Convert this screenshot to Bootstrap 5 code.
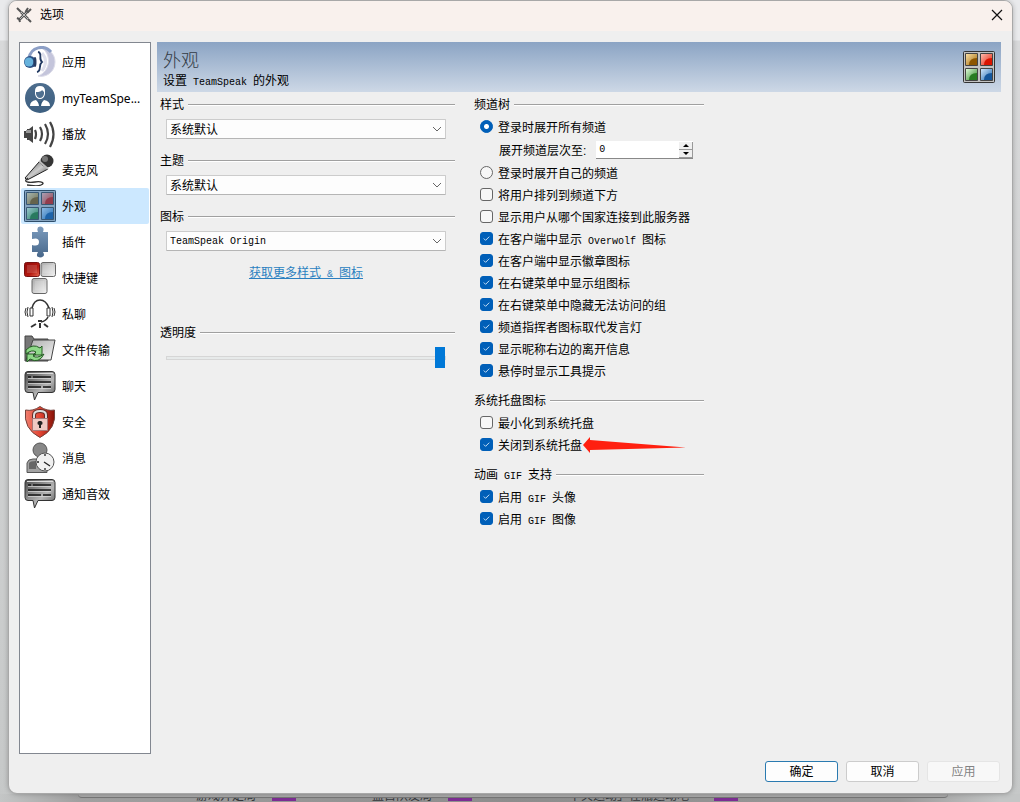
<!DOCTYPE html>
<html lang="zh-CN">
<head>
<meta charset="utf-8">
<meta name="viewport" content="width=device-width, initial-scale=1">
<title>选项</title>
<link href="https://cdn.jsdelivr.net/npm/bootstrap@5.3.0/dist/css/bootstrap.min.css" rel="stylesheet">
<style>
  body { font: 12px/16px "Liberation Sans", "Noto Sans CJK SC", sans-serif; color: #000; background: linear-gradient(#e9eaec 0, #e9eaec 40px, #d8d9da 41px, #c6c8c8 100%); }
  .dialog { margin: 0 7px 0 8px; background: #efefef; border: 1px solid #a8a8a8; border-radius: 9px; box-shadow: 0 0 5px #00000040; position: relative; overflow: hidden; }
  .titlebar { height: 30px; background: #f9f1ed; padding: 0 7px 3px; }
  .titlebar button { width: 14px; height: 14px; }
  .workspace { padding: 11px 11px 0 10px; gap: 6px; }
  .sections { width: 132px; background: #fff; border: 1px solid #828790; padding: 1px; }
  .sections a { height: 36px; padding-left: 3px; gap: 6px; color: #000; font-family: "Noto Sans", "Noto Sans CJK SC", sans-serif; text-decoration: none; border-radius: 2px; white-space: nowrap; }
  .sections a.active { background: #cce8ff; }
  .sections span { padding-top: 2px; }
  .sections svg { width: 32px; height: 32px; flex: none; }
  .banner { height: 50px; padding: 0 6px; background: linear-gradient(#8ba4c4, #cdd8e6); }
  .banner h1 { font: 300 18px/20px "Noto Sans CJK SC", sans-serif; color: #333b45; margin: 0 0 4px; padding-top: 4px; }
  .lat { font-family: "Liberation Mono", monospace; font-size: 10px; line-height: 10px; white-space: pre; }
  .settings { display: grid; grid-template-columns: minmax(0, 295px) minmax(0, 230px); gap: 19px; padding-left: 3px; }
  .heading { display: flex; align-items: center; gap: 4px; height: 24px; margin: 0; padding-top: 2px; font-size: 12px; line-height: 16px; font-weight: 400; white-space: nowrap; }
  .heading::after { content: ""; flex: 1; height: 2px; background: #a0a0a0; border-bottom: 1px solid #fff; }
  .group-gap { margin-top: 6px; }
  .field { margin: 3px 9px 9px 6px; }
  .field .form-select { height: 20px; padding: 1px 20px 0 3px; font-size: 12px; line-height: 16px; color: #000; border: 1px solid #ccc; border-bottom-color: #b5b5b5; border-radius: 1px; background-color: #fdfdfd; background-position: right 3px center; background-size: 10px 10px; background-image: url("data:image/svg+xml,%3csvg xmlns='http://www.w3.org/2000/svg' viewBox='0 0 10 10'%3e%3cpath fill='none' stroke='%23666' d='M1 3l4 4 4-4'/%3e%3c/svg%3e"); }
  .field .form-select.lat { font-size: 10px; }
  .more { height: 24px; margin-right: 3px; padding-top: 2px; }
  .more a { color: #2a7fc0; }
  .opacity-group { margin-top: 36px; }
  .slider { height: 26px; margin: 0 9px 0 6px; padding-top: 2px; }
  .slider input { appearance: none; width: 100%; height: 22px; margin: 0; background: none; display: block; }
  .slider input::-webkit-slider-runnable-track { height: 4px; background: #e7eaea; border: 1px solid #d6d6d6; }
  .slider input::-webkit-slider-thumb { appearance: none; width: 10px; height: 21px; margin-top: -10px; background: #0078d7; border: 0; border-radius: 0; }
  .option { display: flex; align-items: center; gap: 5px; height: 22px; margin: 0; padding-left: 6px; white-space: nowrap; }
  .option label, .level label { padding-top: 2px; }
  .option .form-check-input { width: 13px; height: 13px; float: none; margin: 0 0 1px; border-color: #666; background-color: #f7f7f7; flex: none; }
  .option .form-check-input[type=checkbox] { border-radius: 3px; }
  .option .form-check-input:checked { background-color: #005fb8; border-color: #005fb8; }
  .option .form-check-input[type=radio]:checked { background-image: radial-gradient(circle, #fff 2px, transparent 3px); }
  .option .form-check-input[type=checkbox]:checked { background-image: url("data:image/svg+xml,%3csvg xmlns='http://www.w3.org/2000/svg' viewBox='0 0 12 12'%3e%3cpath fill='none' stroke='%23d5e8fa' d='M3 6l2 2 4-4'/%3e%3c/svg%3e"); }
  .level { height: 24px; padding-left: 25px; gap: 10px; white-space: nowrap; }
  .spin { width: 97px; height: 18px; background: #fff; border-bottom: 1px solid #888; }
  .spin input { width: 100%; min-width: 0; border: 0; padding: 0 3px; background: none; font: 10px/16px "Liberation Mono", monospace; appearance: textfield; }
  .spin input::-webkit-inner-spin-button { display: none; }
  .spin button { width: 14px; height: 8px; padding: 0; border: 0; border-right: 1px solid #999; border-bottom: 1px solid #999; background: #f0f0f0; display: flex; align-items: center; justify-content: center; }
  .pointer { left: 100%; top: 0; width: 104px; height: 18px; }
  .actions { gap: 8px; padding: 7px 12px 11px; }
  .actions .btn { width: 73px; height: 21px; padding: 1px 0 0; font-size: 12px; line-height: 16px; color: #000; background: #fdfdfd; border: 1px solid #ccc; border-radius: 3px; }
  .actions .btn.confirm { border-color: #2a7ab0; }
  .actions .btn:disabled { color: #838383; background: #f8f8f8; border-color: #e5e5e5; opacity: 1; }
  .behind { height: 8px; overflow: hidden; background: linear-gradient(90deg, #c4c6c6 0, #a0a0a0 78px, #8d8d8d 50%, #999 900px, #c4c6c6 1000px); }
  .behind-edge { height: 4px; margin: 0 72px 0 78px; background: #a9a9a9; border-bottom: 1px solid #777; border-radius: 0 0 6px 6px; }
  .behind-rows { height: 3px; padding-left: 196px; overflow: hidden; color: #35383c; align-items: flex-end; white-space: nowrap; }
  .behind-rows span { line-height: 10px; flex: none; }
  .behind-rows .w-a { width: 61px; }
  .behind-rows .w-b { width: 142px; }
  .tag { width: 24px; height: 3px; background: #7c2d92; margin-left: 15px; margin-right: 76px; flex: none; }
  .tag.wide { margin-right: 85px; }
</style>
</head>
<body class="d-flex flex-column min-vh-100">
<svg class="position-absolute" width="0" height="0" aria-hidden="true">
  <defs>
    <linearGradient id="dark" x1="0" y1="0" x2="1" y2="1"><stop offset="0" stop-color="#555"/><stop offset=".5" stop-color="#ccc"/><stop offset="1" stop-color="#333"/></linearGradient>
    <linearGradient id="bubbleFill" x1="0" y1="0" x2="1" y2="1"><stop offset="0" stop-color="#4a4a4a"/><stop offset=".6" stop-color="#b5b5b5"/><stop offset="1" stop-color="#555"/></linearGradient>
    <linearGradient id="blue" x1="0" y1="0" x2="0" y2="1"><stop offset="0" stop-color="#4d6d8d"/><stop offset="1" stop-color="#3d5f80"/></linearGradient>
    <linearGradient id="steel" x1="0" y1="0" x2="0" y2="1"><stop offset="0" stop-color="#7b9bbd"/><stop offset="1" stop-color="#47678a"/></linearGradient>
    <linearGradient id="key" x1="0" y1="0" x2="1" y2="1"><stop offset="0" stop-color="#aaa"/><stop offset="1" stop-color="#f4f4f4"/></linearGradient>
    <linearGradient id="redKey" x1="0" y1="0" x2="1" y2="1"><stop offset="0" stop-color="#930a0a"/><stop offset=".6" stop-color="#b51a10"/><stop offset="1" stop-color="#e56a55"/></linearGradient>
    <linearGradient id="shield" x1="0" y1="0" x2="1" y2="0"><stop offset="0" stop-color="#f08070"/><stop offset=".5" stop-color="#e24432"/><stop offset="1" stop-color="#831006"/></linearGradient>
    <linearGradient id="ta" x1="0" y1="0" x2="1" y2="1"><stop offset="0" stop-color="#ffe5ac"/><stop offset="1" stop-color="#9a6200"/></linearGradient>
    <linearGradient id="tb" x1="0" y1="0" x2="1" y2="1"><stop offset="0" stop-color="#ffc2b5"/><stop offset="1" stop-color="#e21800"/></linearGradient>
    <linearGradient id="tc" x1="0" y1="0" x2="1" y2="1"><stop offset="0" stop-color="#e5ffe0"/><stop offset="1" stop-color="#28831f"/></linearGradient>
    <linearGradient id="td" x1="0" y1="0" x2="1" y2="1"><stop offset="0" stop-color="#d8ecff"/><stop offset="1" stop-color="#1762ad"/></linearGradient>
    <symbol id="bubble" viewBox="0 0 32 32">
      <path d="M4 1.500h24q3 0 3 3v15q0 3-3 3H14L10.500 30 9 22.500H4q-3 0-3-3v-15q0-3 3-3z" fill="url(#bubbleFill)" stroke="#333"/>
      <path d="M3 3.500h26" stroke="#ddd"/>
      <path d="M4 7h3m2 0h18M4 12h23M4 17h13m2 0h8" stroke="#151515" stroke-width="1.600"/>
      <path d="M4 8.500h23M4 13.500h23M4 18.500h23" stroke="#ddd" stroke-width=".7"/>
    </symbol>
    <symbol id="tiles" viewBox="0 0 32 32">
      <rect x=".5" y=".5" width="31" height="31" rx="1" fill="#c2c2c2" stroke="#333"/>
      <g stroke="#444"><path fill="url(#ta)" d="M2.500 2.500h12v12h-12z"/><path fill="url(#tb)" d="M17.500 2.500h12v12h-12z"/><path fill="url(#tc)" d="M2.500 17.500h12v12h-12z"/><path fill="url(#td)" d="M17.500 17.500h12v12h-12z"/></g>
      <path d="M6 14q0-7 8-7v7z" fill="#8c5500"/><path d="M21 14q0-7 8-7v7z" fill="#d91400"/><path d="M6 29q0-7 8-7v7z" fill="#287c20"/><path d="M21 29q0-7 8-7v7z" fill="#15569b"/>
    </symbol>
  </defs>
</svg>

<main class="dialog d-flex flex-column flex-grow-1">
  <header class="titlebar d-flex align-items-center">
    <svg width="16" height="16" viewBox="0 0 16 16" aria-hidden="true"><path d="M3.500 12.500 12 4M12 12 5 5" stroke="#555" stroke-width="2.600"/><path d="M3.500 12.500 12 4M12 12 5 5" stroke="#bbb"/><path d="m1 1 4 4M15 2l-3 3-2-1 2-3M1 11l2 1 1 3M12 12l3 3" fill="none" stroke="#555" stroke-width="2"/></svg>
    <span class="flex-grow-1 ps-1 ms-1">选项</span>
    <button type="button" class="border-0 p-0 bg-transparent d-flex align-items-center" aria-label="关闭"><svg width="12" height="12" viewBox="0 0 12 12"><path d="m1 1 10 10M11 1 1 11" stroke="#111" stroke-width="1.200"/></svg></button>
  </header>

  <div class="workspace d-flex flex-grow-1">
    <nav class="sections flex-shrink-0">
      <a href="#" class="d-flex align-items-center"><svg viewBox="0 0 32 32"><path d="M19 3C28 4 31 10 31 16 31 26 22 32 14 30 27 25 27 9 19 3z" fill="#c4c5db" stroke="#dcdce8"/><path d="M18 7q7 8 0 18" fill="none" stroke="#dfe0ec" stroke-width="3"/><path d="M5 12C7 1 20-2 27 6" fill="none" stroke="#8c9fc6" stroke-width="3"/><path d="M14 6c5 1 0 7 4 10-4 3 0 9-5 10" fill="none" stroke="#213961" stroke-width="1.800"/><circle cx="6" cy="16" r="6" fill="#294f83"/><circle cx="5" cy="16" r="4.500" fill="#66b2dc"/><ellipse cx="11" cy="16" rx="1.500" ry="5" fill="#273d62"/></svg><span>应用</span></a>
      <a href="#" class="d-flex align-items-center"><svg viewBox="0 0 32 32"><circle cx="16" cy="16" r="15" fill="url(#blue)"/><path d="M11 9q0-5 5-5t5 5v3q-1 5-5 5t-5-5z" fill="#fff"/><path d="M12 10q5 0 6-2l2 2v2q-1 4-4 4t-4-4z" fill="#507090"/><path d="M6 24q0-5 6-6l4 5 4-5q6 1 6 6z" fill="#fff"/><path d="m14 19 2 1 2-1-1 5h-2z" fill="#31577a"/></svg><span>myTeamSpe...</span></a>
      <a href="#" class="d-flex align-items-center"><svg viewBox="0 0 32 32"><path d="M0 13h3v7H0zM3 11h2l4-3v17l-4-3H3z" fill="#444"/><path d="M2 12h5v3H2z" fill="#999"/><g fill="none" stroke="#444" stroke-width="2.200"><path d="M11 12q2 4 0 9M16 9q4 7 0 14M21 6q6 10 0 20M26 4q7 12 0 25"/></g></svg><span>播放</span></a>
      <a href="#" class="d-flex align-items-center"><svg viewBox="0 0 32 32"><path d="m15 8 9 7L7 24l-4 2-2-2z" fill="url(#dark)" stroke="#222"/><circle cx="23" cy="7" r="6.500" fill="#353535"/><circle cx="21" cy="5" r="3" fill="#777"/><path d="m15 7 9 8" stroke="#bbb" stroke-width="2"/><path d="M4 24c-6 4 1 5 7 4s11 1 6 3-10 0-14 0" fill="none" stroke="#333" stroke-width="1.300"/></svg><span>麦克风</span></a>
      <a href="#" class="active d-flex align-items-center" aria-current="page"><svg viewBox="0 0 32 32"><use href="#tiles"/><path fill="#2a78bf" fill-opacity=".4" d="M0 0h32v32H0z"/></svg><span>外观</span></a>
      <a href="#" class="d-flex align-items-center"><svg viewBox="0 0 32 32"><path d="M8 6h6q-2-5 2-5.500 5 .500 3 5.500h5v20h-5q3 5-3 5.500-5-.500-2-5.500H8v-7q7 2 7-3t-7-3z" fill="url(#steel)"/></svg><span>插件</span></a>
      <a href="#" class="d-flex align-items-center"><svg viewBox="0 0 32 32"><g stroke="#666"><rect x=".5" y=".5" width="15" height="14" rx="2" fill="url(#redKey)" stroke="#711"/><rect x="17" y=".5" width="14.500" height="14" rx="2" fill="url(#key)"/><rect x="8" y="16.500" width="15" height="15" rx="2" fill="url(#key)"/></g><path d="M3 3h10v8H3zM19 3h10v8H19zM11 19h9v9h-9z" fill="#fff" opacity=".15"/></svg><span>快捷键</span></a>
      <a href="#" class="d-flex align-items-center"><svg viewBox="0 0 32 32" fill="none" stroke="#333"><path d="M8 10Q10 2 16 2t9 8M24 19q-2 4-7 5" stroke-width="1.600"/><path d="M6 10h3v8H6zM23 10h3v8h-3zM4 9q-2 5 0 10M2 10q-2 4 0 8M28 9q2 5 0 10M30 10q2 4 0 8"/><path d="M14 23h4M12 26l-5 3M16 25v5M20 26l4 3" stroke-width="2"/></svg><span>私聊</span></a>
      <a href="#" class="d-flex align-items-center"><svg viewBox="0 0 32 32"><path d="M1 27V2h7l2 3h14v22z" fill="#777" stroke="#444"/><path d="M9 6h22l-4 20H2z" fill="url(#key)" stroke="#444"/><path d="M2 16q7-7 14-2l2-2v9H9l3-3q-4-3-10 2zM20 20q-5 10-14 5l-3 3v-8h9l-3 2q4 3 11-2z" fill="#8ed888" stroke="#245b22"/></svg><span>文件传输</span></a>
      <a href="#" class="d-flex align-items-center"><svg><use href="#bubble"/></svg><span>聊天</span></a>
      <a href="#" class="d-flex align-items-center"><svg viewBox="0 0 32 32"><path d="M16 .500q7 5 14.500 3.500Q33 23 16 31.500-1 23 1.500 4 9 5.500 16 .500z" fill="url(#shield)" stroke="#74423c"/><path d="M10 13V9q0-4 6-4t6 4v4" fill="none" stroke="#642b26" stroke-width="4"/><path d="M10 13V9q0-4 6-4t6 4v4" fill="none" stroke="#ddd" stroke-width="2"/><path d="M8.500 12.500h15v12h-15z" fill="#efc9c3" stroke="#a77"/><path d="M16 15a2 2 0 0 1 1 4v3h-2v-3a2 2 0 0 1 1-4z" fill="#222"/></svg><span>安全</span></a>
      <a href="#" class="d-flex align-items-center"><svg viewBox="0 0 32 32"><circle cx="16" cy="8" r="7" fill="#888" stroke="#555"/><path d="M3 30.500V21q1-4 6-4h14v13.500z" fill="#a2a2a2" stroke="#555"/><path d="M5 21q1-2 7-2v8H5z" fill="#666"/><circle cx="21" cy="20" r="9" fill="#f0f0f0" stroke="#555"/><path d="m20 20 6 4M21 12v2M21 26v2M13 20h2" stroke="#222" stroke-width="1.300"/></svg><span>消息</span></a>
      <a href="#" class="d-flex align-items-center"><svg><use href="#bubble"/></svg><span>通知音效</span></a>
    </nav>

    <section class="flex-grow-1">
      <div class="banner d-flex align-items-center justify-content-between">
        <div><h1>外观</h1><div>设置<span class="lat"> TeamSpeak </span>的外观</div></div>
        <svg width="32" height="32"><use href="#tiles"/></svg>
      </div>
      <form class="settings">
        <div>
          <label class="heading" for="style">样式</label>
          <div class="field"><select class="form-select" id="style"><option>系统默认</option></select></div>
          <label class="heading" for="theme">主题</label>
          <div class="field"><select class="form-select" id="theme"><option>系统默认</option></select></div>
          <label class="heading" for="icons">图标</label>
          <div class="field"><select class="form-select lat" id="icons"><option>TeamSpeak Origin</option></select></div>
          <div class="more d-flex align-items-center justify-content-center"><a href="#">获取更多样式<span class="lat"> &amp; </span>图标</a></div>
          <div class="opacity-group">
            <label class="heading" for="opacity">透明度</label>
            <div class="slider d-flex align-items-center"><input type="range" id="opacity" min="0" max="100" value="100"></div>
          </div>
        </div>
        <div>
          <h2 class="heading">频道树</h2>
          <div class="option"><input class="form-check-input" type="radio" name="expand" id="all" checked><label for="all">登录时展开所有频道</label></div>
          <div class="level d-flex align-items-center"><label for="depth">展开频道层次至:</label>
            <div class="spin d-flex align-items-center"><input type="number" id="depth" value="0"><div><button type="button" aria-label="增加"><svg width="6" height="3"><path d="M0 3 3 0l3 3z"/></svg></button><button type="button" aria-label="减少"><svg width="6" height="3"><path d="m0 0 3 3 3-3z"/></svg></button></div></div></div>
          <div class="option"><input class="form-check-input" type="radio" name="expand" id="own"><label for="own">登录时展开自己的频道</label></div>
          <div class="option"><input class="form-check-input" type="checkbox" id="c1"><label for="c1">将用户排列到频道下方</label></div>
          <div class="option"><input class="form-check-input" type="checkbox" id="c2"><label for="c2">显示用户从哪个国家连接到此服务器</label></div>
          <div class="option"><input class="form-check-input" type="checkbox" id="c3" checked><label for="c3">在客户端中显示<span class="lat"> Overwolf </span>图标</label></div>
          <div class="option"><input class="form-check-input" type="checkbox" id="c4" checked><label for="c4">在客户端中显示徽章图标</label></div>
          <div class="option"><input class="form-check-input" type="checkbox" id="c5" checked><label for="c5">在右键菜单中显示组图标</label></div>
          <div class="option"><input class="form-check-input" type="checkbox" id="c6" checked><label for="c6">在右键菜单中隐藏无法访问的组</label></div>
          <div class="option"><input class="form-check-input" type="checkbox" id="c7" checked><label for="c7">频道指挥者图标取代发言灯</label></div>
          <div class="option"><input class="form-check-input" type="checkbox" id="c8" checked><label for="c8">显示昵称右边的离开信息</label></div>
          <div class="option"><input class="form-check-input" type="checkbox" id="c9" checked><label for="c9">悬停时显示工具提示</label></div>
          <h2 class="heading group-gap">系统托盘图标</h2>
          <div class="option"><input class="form-check-input" type="checkbox" id="t1"><label for="t1">最小化到系统托盘</label></div>
          <div class="option"><input class="form-check-input" type="checkbox" id="t2" checked><label for="t2" class="position-relative">关闭到系统托盘<svg class="pointer position-absolute" viewBox="0 0 104 18" aria-hidden="true"><path d="M1 9 8 1v3l96 7.500L8 14v3z" fill="#ff2010"/></svg></label></div>
          <h2 class="heading group-gap"><span>动画<span class="lat"> GIF </span>支持</span></h2>
          <div class="option"><input class="form-check-input" type="checkbox" id="g1" checked><label for="g1">启用<span class="lat"> GIF </span>头像</label></div>
          <div class="option"><input class="form-check-input" type="checkbox" id="g2" checked><label for="g2">启用<span class="lat"> GIF </span>图像</label></div>
        </div>
      </form>
    </section>
  </div>

  <footer class="actions d-flex justify-content-end">
    <button type="button" class="btn confirm">确定</button>
    <button type="button" class="btn">取消</button>
    <button type="button" class="btn" disabled>应用</button>
  </footer>
</main>

<div class="behind" aria-hidden="true">
  <div class="behind-edge"></div>
  <div class="behind-rows d-flex"><span class="w-a">游戏开定局</span><i class="tag"></i><span class="w-a">盘古队友局</span><i class="tag wide"></i><span class="w-b">「下关运动」在瓶运动吧</span><i class="tag"></i></div>
</div>
<script src="https://cdn.jsdelivr.net/npm/bootstrap@5.3.0/dist/js/bootstrap.bundle.min.js"></script>
</body>
</html>
